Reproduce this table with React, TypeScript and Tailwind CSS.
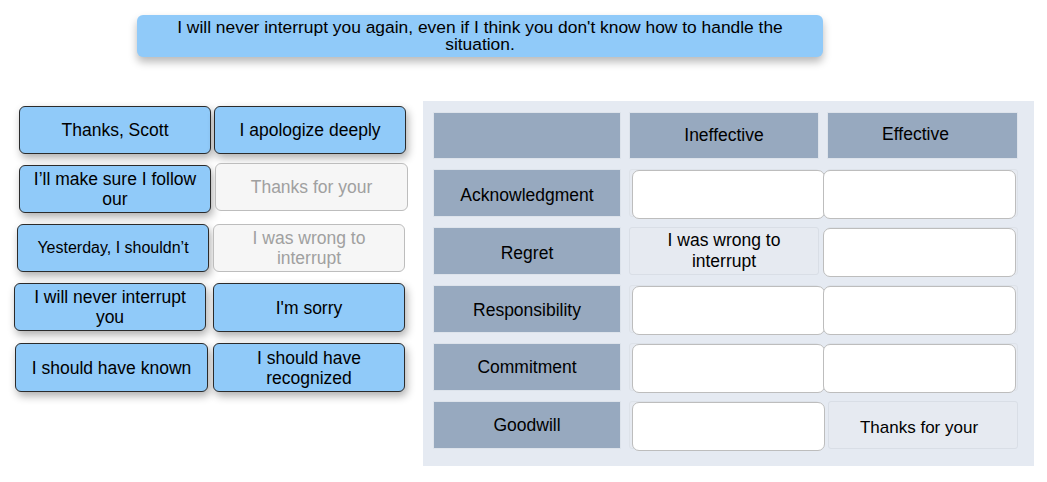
import React from 'react';

type Card = { text: string; faded?: boolean; cls: string; size?: string };

const rows: Card[][] = [
  [
    { text: 'Thanks, Scott', cls: 'ml-[19px]' },
    { text: 'I apologize deeply', cls: 'ml-[3px]' },
  ],
  [
    { text: 'I’ll make sure I follow our', cls: 'ml-[19px]' },
    { text: 'Thanks for your', faded: true, cls: 'ml-[4px] -mt-[2px] w-[193px]' },
  ],
  [
    { text: 'Yesterday, I shouldn’t', cls: 'ml-[17px]', size: 'text-[16px]' },
    { text: 'I was wrong to interrupt', faded: true, cls: 'ml-[4px]' },
  ],
  [
    { text: 'I will never interrupt you', cls: 'ml-[14px]' },
    { text: "I'm sorry", cls: 'ml-[7px] h-[49px]' },
  ],
  [
    { text: 'I should have known', cls: 'ml-[15px] w-[193px] h-[49px]' },
    { text: 'I should have recognized', cls: 'ml-[5px] h-[49px]' },
  ],
];

const labels = ['Acknowledgment', 'Regret', 'Responsibility', 'Commitment', 'Goodwill'];
const labelPad = ['pt-[4px]', 'pt-[5px]', 'pt-[2px]', '', ''];

// filled slots: [row][col]
const filled: Record<string, string> = {
  '1-0': 'I was wrong to interrupt',
  '4-1': 'Thanks for your',
};

const DragCard: React.FC<{ card: Card }> = ({ card }) => (
  <div
    className={`w-[192px] h-[48px] flex items-center justify-center text-center px-2 rounded-[6px] border leading-[20px] ${
      card.size ?? 'text-[17.5px]'
    } ${
      card.faded
        ? 'bg-[#f6f6f6] border-[#bdbdbd] text-[#a0a0a0]'
        : 'bg-[#90caf9] border-[#2b2b2b] text-black shadow-[2px_4px_8px_rgba(0,0,0,0.32)]'
    } ${card.cls}`}
  >
    {card.text}
  </div>
);

export default function App() {
  return (
    <div className="w-[1047px] h-[482px] bg-white font-['Liberation_Sans',Arial,sans-serif] overflow-hidden">
      <div className="pt-[15px] pl-[137px]">
        <div className="w-[686px] h-[42px] bg-[#90caf9] rounded-[6px] flex items-center justify-center text-center px-4 text-[17.4px] leading-[17px] text-black shadow-[0_5px_8px_rgba(0,0,0,0.28)]">
          I will never interrupt you again, even if I think you don't know how to handle the situation.
        </div>
      </div>

      <div className="flex mt-[44px]">
        <div className="w-[423px] pt-[5px] flex flex-col gap-[11px]">
          {rows.map((row, i) => (
            <div key={i} className="flex items-start">
              {row.map((c) => (
                <DragCard key={c.text} card={c} />
              ))}
            </div>
          ))}
        </div>

        <div className="w-[611px] h-[365px] bg-[#e5eaf2] pl-[10px] pr-[15px] pt-[11px]">
          <div className="grid grid-cols-[188px_190px_191px] gap-x-[8px] gap-y-[10px] text-[17.5px] text-black">
            <div className="h-[47px] bg-[#97a9bf] border border-[#dde3eb]" />
            <div className="h-[47px] bg-[#97a9bf] border border-[#dde3eb] flex items-center justify-center">
              Ineffective
            </div>
            <div className="h-[47px] bg-[#97a9bf] border border-[#dde3eb] flex items-center justify-center pb-[3px] pr-[14px]">
              Effective
            </div>

            {labels.map((label, r) => (
              <React.Fragment key={label}>
                <div className={`h-[48px] bg-[#97a9bf] border border-[#dde3eb] flex items-center justify-center ${labelPad[r]}`}>
                  {label}
                </div>
                {[0, 1].map((c) => {
                  const text = filled[`${r}-${c}`];
                  if (text) {
                    return (
                      <div
                        key={c}
                        className={`h-[48px] bg-[#e6eaf1] border border-[#d9dee6] rounded-[3px] flex items-center justify-center text-center leading-[21px] ${
                          c === 1 ? 'ml-[1px] text-[17px] pt-[4px] pl-[16px] pr-[24px]' : 'px-6'
                        }`}
                      >
                        {text}
                      </div>
                    );
                  }
                  return (
                    <div key={c} className="h-[48px] bg-[#e6eaf1] border border-[#dde2e9] rounded-[3px] relative">
                      <div
                        className={`absolute top-0 h-[49px] w-[193px] bg-white border border-[#bdbdbd] rounded-[7px] ${
                          c === 0 ? 'left-[2px]' : 'left-[-5px]'
                        }`}
                      />
                    </div>
                  );
                })}
              </React.Fragment>
            ))}
          </div>
        </div>
      </div>
    </div>
  );
}
